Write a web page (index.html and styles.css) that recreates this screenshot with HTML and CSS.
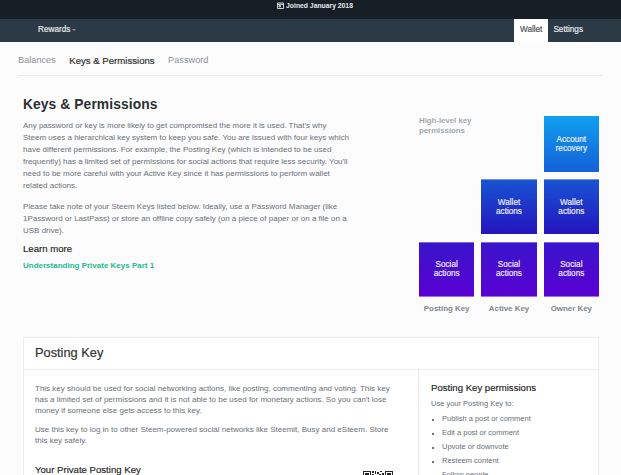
FILE: index.html
```html
<!DOCTYPE html>
<html lang="en">
<head>
<meta charset="utf-8">
<title>Keys &amp; Permissions</title>
<link rel="stylesheet" href="styles.css">
</head>
<body>
<div class="page">
  <header class="topbar">
    <svg class="cal" width="7" height="7" viewBox="0 0 7 7"><path d="M.5 1h6v5.5h-6zM.5 2.4h6M2 3.5h1.5v1.5H2z" fill="none" stroke="#e4e8ea" stroke-width=".9"/></svg>
    <span>Joined January 2018</span>
  </header>
  <nav class="navbar">
    <span class="rewards">Rewards<i class="caret"></i></span>
    <div class="nav-right">
      <span class="nav-tab active">Wallet</span>
      <span class="nav-tab">Settings</span>
    </div>
  </nav>
  <div class="subtabs">
    <span>Balances</span>
    <span class="current">Keys &amp; Permissions</span>
    <span>Password</span>
  </div>
  <section class="intro">
    <div class="intro-text">
      <h1>Keys &amp; Permissions</h1>
      <p class="lead">Any password or key is more likely to get compromised the more it is used. That's why Steem uses a hierarchical key system to keep you safe. You are issued with four keys which have different permissions. For example, the Posting Key (which is intended to be used frequently) has a limited set of permissions for social actions that require less security. You'll need to be more careful with your Active Key since it has permissions to perform wallet related actions.</p>
      <p>Please take note of your Steem Keys listed below. Ideally, use a Password Manager (like 1Password or LastPass) or store an offline copy safely (on a piece of paper or on a file on a USB drive).</p>
      <h4>Learn more</h4>
      <a class="learn" href="#">Understanding Private Keys Part 1</a>
    </div>
    <div class="diagram">
      <div class="cap">High-level key permissions</div>
      <div class="spacer"></div>
      <div class="tile t-blue">Account recovery</div>
      <div class="spacer"></div>
      <div class="tile t-mid">Wallet actions</div>
      <div class="tile t-mid">Wallet actions</div>
      <div class="tile t-violet">Social actions</div>
      <div class="tile t-violet">Social actions</div>
      <div class="tile t-violet">Social actions</div>
      <div class="lbl">Posting Key</div>
      <div class="lbl">Active Key</div>
      <div class="lbl">Owner Key</div>
    </div>
  </section>
  <section class="card">
    <h2 class="card-head">Posting Key</h2>
    <div class="card-body">
      <div class="card-main">
        <p>This key should be used for social networking actions, like posting, commenting and voting. This key has a limited set of permissions and it is not able to be used for monetary actions. So you can't lose money if someone else gets access to this key.</p>
        <p>Use this key to log in to other Steem-powered social networks like Steemit, Busy and eSteem. Store this key safely.</p>
        <div class="key-row">
          <h4>Your Private Posting Key</h4>
          <svg class="qr" width="30" height="30" viewBox="0 0 30 30"><path d="M0 0h8v8H0zM22 0h8v8h-8zM0 22h8v8H0z" fill="#222"/><path d="M1 1h6v6H1zM23 1h6v6h-6z" fill="#fff"/><path d="M2 2h4v4H2zM24 2h4v4h-4zM9 0h2v2H9zM12 0h1v3h-1zM14 1h2v2h-2zM17 0h2v1h-2zM19 2h2v2h-2zM9 3h2v2H9zM12 4h3v1h-3zM16 3h2v3h-2z" fill="#222"/></svg>
        </div>
      </div>
      <aside class="card-side">
        <h4>Posting Key permissions</h4>
        <p>Use your Posting Key to:</p>
        <ul>
          <li>Publish a post or comment</li>
          <li>Edit a post or comment</li>
          <li>Upvote or downvote</li>
          <li>Resteem content</li>
          <li>Follow people</li>
        </ul>
      </aside>
    </div>
  </section>
</div>
</body>
</html>
```
FILE: styles.css
```css
* { box-sizing: border-box; }
html, body { margin: 0; height: 100%; overflow: hidden; }
body { background: #fcfcfc; font-family: "Liberation Sans", Arial, sans-serif; color: #6a7078; font-size: 8px; }
.page { width: 621px; height: 475px; overflow: hidden; }
p { margin: 0; line-height: 12px; }
.topbar { height: 19px; background: #171f26; color: #e6ebee; display: flex; align-items: center; justify-content: center; gap: 2px; font-size: 6.8px; font-weight: 700; padding: 0 0 8px 9px; }
.navbar { height: 23px; background: #2c3a45; color: #e4e7e9; display: flex; justify-content: space-between; align-items: stretch; padding-left: 38px; padding-right: 33px; font-size: 8.2px; -webkit-text-stroke: .2px #e4e7e9; }
.rewards { display: flex; align-items: center; padding-bottom: 2px; }
.caret { width: 0; height: 0; margin: 1px 0 0 2px; border: 2px solid transparent; border-top: 2.5px solid #8b959c; border-bottom: 0; }
.nav-right { display: flex; }
.nav-tab { display: flex; align-items: center; padding: 0 5px 2px; }
.nav-tab.active { background: #fff; color: #555; -webkit-text-stroke: .2px #555; padding: 0 6px 2px; }
.subtabs { margin: 0 18px; height: 34px; display: flex; align-items: center; gap: 13.5px; border-bottom: 1px solid #eaeaea; font-size: 9.2px; color: #8d9298; padding-top: 3px; }
.subtabs .current { color: #333; font-size: 9.6px; -webkit-text-stroke: .2px #333; }
.intro { display: flex; justify-content: space-between; padding: 20px 22px 0 23px; height: 261px; }
.intro-text { width: 326.5px; }
h1 { margin: 0 0 6px; font-size: 13.8px; line-height: 18px; font-weight: 700; color: #2b2f33; letter-spacing: .1px; }
.lead::first-line { letter-spacing: -.02px; }
.intro-text p + p { margin-top: 9px; }
h4 { margin: 0; font-weight: 400; color: #222; -webkit-text-stroke: .15px #222; }
.intro-text h4 { font-size: 9.6px; margin-top: 5px; line-height: 13px; }
.learn { display: block; margin-top: 5px; font-size: 8px; font-weight: 700; line-height: 12px; color: #1fb992; text-decoration: none; }
.diagram { width: 180px; margin-top: 20px; display: grid; grid-template-columns: repeat(3, 55.33px); grid-template-rows: 55.5px 55.5px 55.5px auto; gap: 7.3px 7px; height: 200px; }
.cap { font-size: 7.8px; font-weight: 700; color: #a3a9af; line-height: 9.5px; width: 60px; }
.tile { display: flex; align-items: center; justify-content: center; text-align: center; color: #f2f2fb; -webkit-text-stroke: .15px #f2f2fb; font-size: 8.2px; line-height: 9.2px; padding: 0 8px; }
.t-blue { background: linear-gradient(#10a0ef, #1460d8); }
.t-mid { background: linear-gradient(#1854d2, #2414bf); border-top: 1px solid #7d8fe4; }
.t-violet { background: linear-gradient(#3a14cb, #5a02d4); border-top: 1px solid #7d6ae0; border-bottom: 1px solid #a070ea; }
.lbl { text-align: center; font-size: 7.9px; font-weight: 700; color: #7f868d; }
.card { margin: 0 22px 0 23px; background: #fff; border: 1px solid #ececec; }
.card-head { margin: 0; height: 32px; padding: 0 11px 2px; display: flex; align-items: center; font-size: 12.8px; font-weight: 400; color: #333; -webkit-text-stroke: .2px #333; border-bottom: 1px solid #ececec; }
.card-body { display: flex; }
.card-main { width: 394px; padding: 13px 25px 0 11px; }
.card-main p { line-height: 11px; margin-bottom: 8px; }
.key-row { display: flex; justify-content: space-between; margin-top: 18px; }
.key-row h4 { font-size: 9.6px; line-height: 12px; }
.qr { margin-top: 7px; }
.card-side { flex: 1; border-left: 1px solid #ececec; padding: 12px 12px 0; font-size: 7.5px; }
.card-side h4 { font-size: 9.6px; line-height: 12px; margin-bottom: 4px; }
.card-side ul { margin: 2px 0 0; padding: 0 0 0 11px; list-style: square; }
.card-side li { line-height: 14px; }
.card-side li::marker { font-size: 5px; }
```
